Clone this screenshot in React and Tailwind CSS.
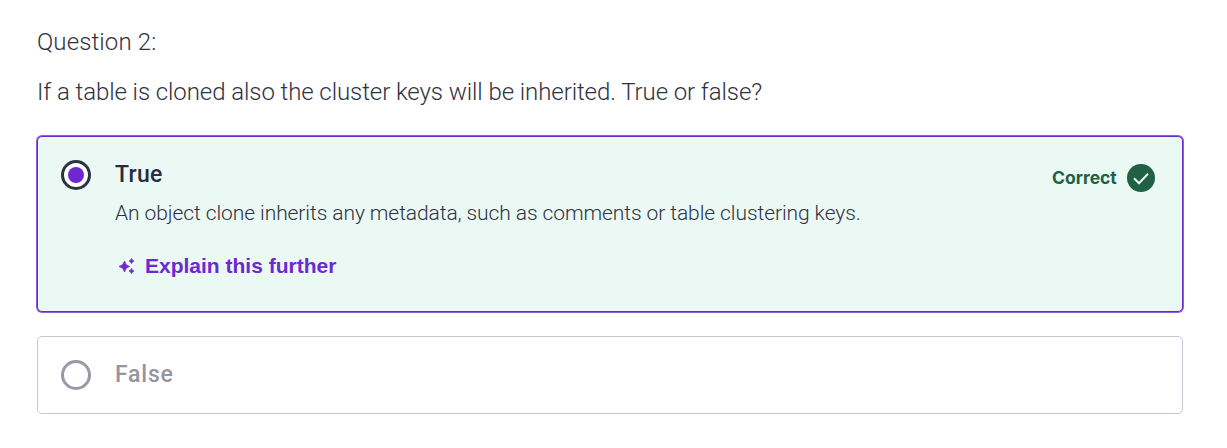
function Sparkles() {
  return (
    <svg className="h-[18px] w-[18px] shrink-0" viewBox="0 0 18 18" fill="currentColor">
      <path d="M6.5 4 Q7.4 8.6 11.5 9.5 Q7.4 10.4 6.5 15 Q5.6 10.4 1 9.5 Q5.6 8.6 6.5 4Z" stroke="currentColor" strokeWidth="0.8" />
      <path d="M13.5 1.5 Q14 3.5 16 4 Q14 4.5 13.5 6.5 Q13 4.5 11 4 Q13 3.5 13.5 1.5Z" stroke="currentColor" strokeWidth="0.8" />
      <path d="M13.5 11.5 Q14 13.5 16 14 Q14 14.5 13.5 16.5 Q13 14.5 11 14 Q13 13.5 13.5 11.5Z" stroke="currentColor" strokeWidth="0.8" />
    </svg>
  );
}

export default function App() {
  return (
    <main className="h-[448px] w-[1227px] overflow-hidden bg-white pl-[37px] pt-[26px] font-['Roboto',sans-serif] text-[#303141]">
      <p className="h-8 whitespace-nowrap text-[24px] font-light leading-8 tracking-[0.12px]">Question 2:</p>
      <p className="mt-[18px] h-8 whitespace-nowrap text-[24px] font-light leading-8 tracking-[-0.08px]">
        If a table is cloned also the cluster keys will be inherited. True or false?
      </p>
      <section className="mt-7 flex h-44 w-[1146px] items-start rounded-[5px] border border-[#6d28d2] bg-[#eaf9f4] pl-[23px] pt-[23px] shadow-[0_0_0_1px_#905bdd]">
        <span className="flex h-[30px] w-[30px] shrink-0 items-center justify-center rounded-full border-[3px] border-[#303141] bg-white">
          <span className="h-4 w-4 rounded-full bg-[#6d28d2]" />
        </span>
        <div className="ml-6 w-[937px]">
          <h2 className="h-8 text-[23px] font-medium leading-[30px] tracking-[0.3px] text-[#2a2b3f]">True</h2>
          <p className="mt-[5px] h-8 whitespace-nowrap text-[21px] font-light leading-8 tracking-[-0.085px]">
            An object clone inherits any metadata, such as comments or table clustering keys.
          </p>
          <button className="ml-[3px] mt-[21px] flex h-8 items-center gap-[9px] whitespace-nowrap font-['Liberation_Sans',sans-serif] text-[21px] font-bold leading-8 text-[#6d28d2]">
            <Sparkles />
            Explain this further
          </button>
        </div>
        <div className="mt-[3px] flex h-[30px] items-center gap-[10px] text-[#206044]">
          <span className="w-[65px] whitespace-nowrap font-['Inter',sans-serif] text-[17.5px] font-bold">Correct</span>
          <svg className="h-7 w-7 shrink-0" viewBox="0 0 28 28" fill="none">
            <circle cx="14" cy="14" r="14" fill="#206044" />
            <path d="M7 14.3 L12 19.3 L21 9.7" stroke="#eaf9f5" strokeWidth="2" />
          </svg>
        </div>
      </section>
      <section className="mt-6 flex h-[78px] w-[1146px] items-center rounded-[5px] border border-[#c7c5d6] pl-[23px]">
        <span className="h-[30px] w-[30px] shrink-0 rounded-full border-[3px] border-[#9a98a6]" />
        <h2 className="ml-6 text-[23px] font-medium leading-8 tracking-[0.8px] text-[#9594a0]">False</h2>
      </section>
    </main>
  );
}
